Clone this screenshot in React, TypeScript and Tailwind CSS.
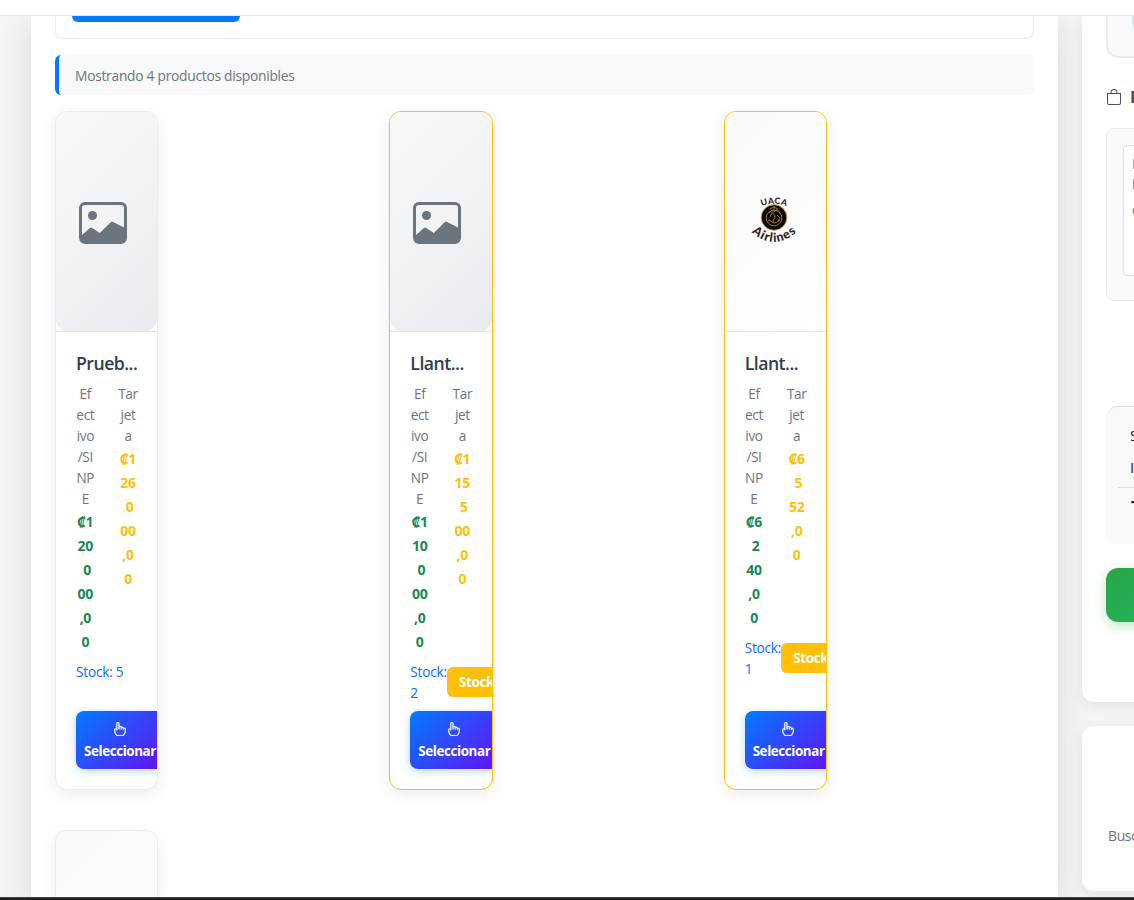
import type { ReactNode } from "react";
import { BsBag, BsHandIndex, BsImage } from "react-icons/bs";

type Product = {
  name: string;
  cash: string[];
  card: string[];
  stock: number;
  low?: boolean;
  logo?: boolean;
};

const LABEL_CASH = ["Ef", "ect", "ivo", "/SI", "NP", "E"];
const LABEL_CARD = ["Tar", "jet", "a"];

const products: Product[] = [
  {
    name: "Prueb...",
    cash: ["₡1", "20", "\u00a00", "00", ",0", "0"],
    card: ["₡1", "26", "\u00a00", "00", ",0", "0"],
    stock: 5,
  },
  {
    name: "Llant...",
    cash: ["₡1", "10", "\u00a00", "00", ",0", "0"],
    card: ["₡1", "15", "\u00a05", "00", ",0", "0"],
    stock: 2,
    low: true,
  },
  {
    name: "Llant...",
    cash: ["₡6", "\u00a02", "40", ",0", "0"],
    card: ["₡6", "\u00a05", "52", ",0", "0"],
    stock: 1,
    low: true,
    logo: true,
  },
];

function AirlineLogo() {
  return (
    <svg width="50" height="50" viewBox="0 0 50 50" className="mr-0.5 mb-1 overflow-visible">
      <defs>
        <path id="arc-top" d="M9 13 Q 25 4.5 41 13" />
        <path id="arc-bottom" d="M1.5 36 Q 25 58 48.5 36" />
      </defs>
      <text fontFamily="Lato" fontWeight="900" fontSize="8.6" fill="#33241a" textAnchor="middle">
        <textPath href="#arc-top" startOffset="50%" textLength="25">UACA</textPath>
      </text>
      <circle cx="25" cy="22.5" r="12.8" fill="#0a0805" stroke="#c8964c" strokeWidth="1" />
      <g fill="none" stroke="#b08040" strokeWidth="0.9">
        <circle cx="25" cy="23" r="7.8" />
        <path d="M20 18c2-3 4 1 6-2s4 0 5 2M21 22c1-4 4-4 5-1s-3 3-2 6M28 20l3 3-2 4M19 25c3 0 4 3 7 3s2-3 5-3M21 14l4-2 4 2M25 11v5" />
      </g>
      <text fontFamily="Lato" fontWeight="900" fontSize="12.6" fill="#33241a" textAnchor="middle">
        <textPath href="#arc-bottom" startOffset="50%" textLength="50">Airlines</textPath>
      </text>
    </svg>
  );
}

function Lines({ items }: { items: string[] }) {
  return (
    <>
      {items.map((line, i) => (
        <span key={i} className="block whitespace-nowrap">
          {line}
        </span>
      ))}
    </>
  );
}

function PriceColumn({ label, value, color }: { label: string[]; value: string[]; color: string }) {
  return (
    <div className="flex w-[18.67px] flex-col items-center text-center">
      <div className="-mt-px mb-px text-[13.6px] leading-[21px] tracking-[-0.35px] text-[#6c757d]">
        <Lines items={label} />
      </div>
      <div className={`text-[14px] leading-6 font-bold tracking-[-0.3px] ${color}`}>
        <Lines items={value} />
      </div>
    </div>
  );
}

function CardFrame({ low, className = "", children }: { low?: boolean; className?: string; children: ReactNode }) {
  return (
    <div
      className={`flex w-[103.33px] flex-col overflow-hidden rounded-xl border bg-white shadow-[0_4px_15px_rgba(0,0,0,0.08)] ${
        low ? "border-[#ffc107]" : "border-[#e9ecef]"
      } ${className}`}
    >
      {children}
    </div>
  );
}

function ProductCard({ product }: { product: Product }) {
  return (
    <CardFrame low={product.low} className="h-[679px]">
      <div className="h-[220px] shrink-0 border-b border-[#e2e5e8]">
        <div
          className={`flex h-full items-center justify-center bg-linear-135 from-[#f8f9fa] ${
            product.logo ? "to-[#ffffff]" : "rounded-b-xl to-[#e9ecef] pr-2"
          }`}
        >
          {product.logo ? <AirlineLogo /> : <BsImage className="mt-0.5 size-12 text-[#6c757d]" />}
        </div>
      </div>
      <div className="flex grow flex-col p-5">
        <h3 className="-mt-px mb-[9px] text-[17.6px] leading-6 font-semibold tracking-[-0.48px] whitespace-nowrap text-[#2c3e50]">
          {product.name}
        </h3>
        <div className="mb-[7px] flex gap-6">
          <PriceColumn label={LABEL_CASH} value={product.cash} color="text-[#198754]" />
          <PriceColumn label={LABEL_CARD} value={product.card} color="text-[#ffc107]" />
        </div>
        <div className="flex items-center text-[13.6px] leading-[21px] tracking-[-0.2px] text-[#0d6efd]">
          {product.low ? (
            <>
              <span className="w-[36.5px] shrink-0 whitespace-nowrap">
                Stock:
                <br />
                {product.stock}
              </span>
              <span className="flex h-[30px] w-[80px] shrink-0 items-center rounded-md bg-[#ffc107] pb-0.5 pl-3 text-[13.6px] font-bold tracking-[-0.4px] whitespace-nowrap text-white">
                Stock bajo
              </span>
            </>
          ) : (
            <span className="whitespace-nowrap">Stock: {product.stock}</span>
          )}
        </div>
        <button className="mt-auto flex h-[58px] w-[88px] shrink-0 flex-col items-center rounded-lg bg-[linear-gradient(135deg,#007bff,#6610f2)] pt-[11px] text-[13.4px] font-bold text-white shadow-[0_2px_8px_rgba(0,123,255,0.3)]">
          <BsHandIndex className="mr-[3px] size-[14px] shrink-0 stroke-white stroke-[0.4px]" />
          <span className="mt-1 leading-[22px] tracking-[-0.4px] whitespace-nowrap">Seleccionar</span>
        </button>
      </div>
    </CardFrame>
  );
}

function Catalog() {
  return (
    <main className="h-[881px] w-[1027px] shrink-0 bg-white px-6 shadow-[0_8px_32px_rgba(0,0,0,0.12)]">
      <div className="h-[23px] rounded-b-lg border border-t-0 border-[#e9ecef] pl-4">
        <div className="h-1.5 w-[168px] rounded-b-lg bg-[#007bff]" />
      </div>
      <p className="mt-4 flex h-10 items-center rounded-md border-l-4 border-[#007bff] bg-[#f8f9fa] pt-0.5 pl-4 text-[13.8px] tracking-[-0.27px] text-[#6c757d]">
        Mostrando 4 productos disponibles
      </p>
      <div className="mt-4 grid grid-cols-3 gap-x-6 gap-y-10">
        {products.map((product, i) => (
          <ProductCard key={i} product={product} />
        ))}
        <CardFrame className="h-[67px] rounded-b-none border-b-0">
          <div className="h-[220px] shrink-0 bg-linear-135 from-[#f8f9fa] to-white" />
        </CardFrame>
      </div>
    </main>
  );
}

function Sidebar() {
  return (
    <aside className="flex w-[330px] shrink-0 flex-col gap-6">
      <section className="h-[686px] rounded-b-xl bg-white px-6 shadow-[0_4px_15px_rgba(0,0,0,0.08)]">
        <div className="h-[42px] rounded-b-xl border-2 border-t-0 border-[#e9ecef] bg-[#f8f9fa] pl-6">
          <div className="h-[13px] rounded-bl-md bg-[#d1ecf1]" />
        </div>
        <h2 className="mt-[27px] flex h-6 items-center gap-2 text-[16px] font-bold text-[#495057]">
          <BsBag className="size-4" />
          Pedido
        </h2>
        <div className="mt-[19px] h-[173px] rounded-lg border border-[#e9ecef] bg-[#fafafa] p-4">
          <div className="h-[131px] rounded-[4px] border border-[#dee2e6] bg-white pt-2 pl-2 text-[14px] leading-[21px] text-[#6c757d]">
            <p className="-mt-px">No hay productos</p>
            <p className="-mt-px">incluidos</p>
            <p className="mt-[5px]">en el pedido</p>
          </div>
        </div>
        <div className="mt-[105px] h-[138px] rounded-xl border-t border-[#dee2e6] bg-[#f8f9fa] px-3 pt-4 text-[15px] text-[#212529]">
          <p className="pl-3 leading-6">Subtotal:</p>
          <p className="mt-2 border-b border-[#dee2e6] pb-2 pl-3 leading-6">IVA:</p>
          <p className="mt-2.5 pl-[13px] text-[17px] leading-5 font-bold">Total:</p>
        </div>
        <button className="mt-6 block h-[54px] w-full rounded-xl bg-[linear-gradient(135deg,#28a745,#20c997)] shadow-[0_4px_12px_rgba(40,167,69,0.3)]" />
      </section>
      <section className="h-[165px] rounded-xl bg-white pt-[99px] pl-[26px] text-[14px] leading-[21px] tracking-[-0.4px] text-[#6c757d] shadow-[0_4px_15px_rgba(0,0,0,0.08)]">
        Buscar productos
      </section>
    </aside>
  );
}

export default function App() {
  return (
    <div className="flex h-[900px] w-[1134px] flex-col overflow-hidden bg-[#f4f5f7] font-['Open_Sans','Noto_Sans',sans-serif]">
      <header className="h-4 shrink-0 border-b border-[#e5e7e9] bg-white" />
      <div className="flex h-[881px] shrink-0 gap-6 overflow-hidden pl-[31px]">
        <Catalog />
        <Sidebar />
      </div>
      <footer className="h-[3px] shrink-0 border-t border-[#444444] bg-[#231f20]" />
    </div>
  );
}
